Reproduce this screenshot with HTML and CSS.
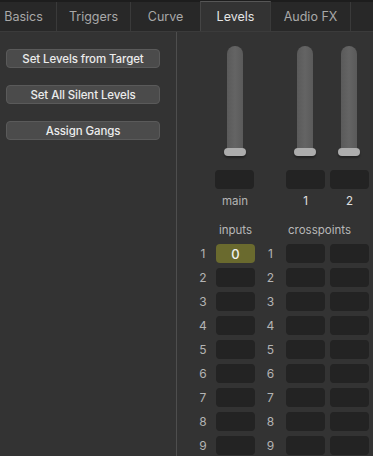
FILE: index.html
```html
<!DOCTYPE html>
<html>
<head>
<meta charset="utf-8">
<link rel="stylesheet" href="styles.css">
</head>
<body>
<div class="app">
  <div class="tabs">
    <div class="tab w-basics">Basics</div>
    <div class="tab w-triggers">Triggers</div>
    <div class="tab w-curve">Curve</div>
    <div class="tab w-levels active">Levels</div>
    <div class="tab w-audio">Audio FX</div>
    <div class="tab-fill"></div>
  </div>
  <div class="body">
    <div class="left">
      <div class="btn">Set Levels from Target</div>
      <div class="btn">Set All Silent Levels</div>
      <div class="btn">Assign Gangs</div>
    </div>
    <div class="divider"></div>
    <div class="right">
      <div class="cols sliders">
        <span></span>
        <div class="slider"><div class="track"></div><div class="handle"></div></div>
        <span></span>
        <div class="slider"><div class="track"></div><div class="handle"></div></div>
        <span></span>
        <div class="slider"><div class="track"></div><div class="handle"></div></div>
      </div>
      <div class="cols meters">
        <span></span><div class="box main"></div><span></span><div class="box"></div><span></span><div class="box"></div>
      </div>
      <div class="cols labels">
        <span></span><div class="lab dim">main</div><span></span><div class="lab">1</div><span></span><div class="lab">2</div>
      </div>
      <div class="cols heads">
        <span></span><div class="head">inputs</div><span></span><div class="head xp">crosspoints</div>
      </div>
      <div class="rows">
        <div class="cols row"><div class="num">1</div><div class="box on">0</div><div class="num">1</div><div class="box"></div><span></span><div class="box"></div></div>
        <div class="cols row"><div class="num">2</div><div class="box"></div><div class="num">2</div><div class="box"></div><span></span><div class="box"></div></div>
        <div class="cols row"><div class="num">3</div><div class="box"></div><div class="num">3</div><div class="box"></div><span></span><div class="box"></div></div>
        <div class="cols row"><div class="num">4</div><div class="box"></div><div class="num">4</div><div class="box"></div><span></span><div class="box"></div></div>
        <div class="cols row"><div class="num">5</div><div class="box"></div><div class="num">5</div><div class="box"></div><span></span><div class="box"></div></div>
        <div class="cols row"><div class="num">6</div><div class="box"></div><div class="num">6</div><div class="box"></div><span></span><div class="box"></div></div>
        <div class="cols row"><div class="num">7</div><div class="box"></div><div class="num">7</div><div class="box"></div><span></span><div class="box"></div></div>
        <div class="cols row"><div class="num">8</div><div class="box"></div><div class="num">8</div><div class="box"></div><span></span><div class="box"></div></div>
        <div class="cols row"><div class="num">9</div><div class="box"></div><div class="num">9</div><div class="box"></div><span></span><div class="box"></div></div>
      </div>
    </div>
  </div>
</div>
</body>
</html>
```

FILE: styles.css
```css
* { box-sizing: border-box; }
html, body { margin: 0; padding: 0; background: #333333; }
body {
  width: 373px; height: 456px; overflow: hidden;
  font-family: Inter, "Liberation Sans", sans-serif;
  font-size: 12px;
}
.app { display: flex; flex-direction: column; height: 456px; }
.tabs {
  display: flex; height: 32px;
  background: #282828;
  border-top: 2px solid #1d1d1d;
  border-bottom: 1px solid #3b3b3b;
}
.tab {
  display: flex; align-items: center; justify-content: center;
  color: #a9a9a9; font-size: 12.5px;
  border-right: 1px solid #3a3a3a;
  height: 29px;
}
.w-basics { width: 57px; padding-right: 9px; }
.w-triggers { width: 74px; }
.w-curve { width: 70px; }
.w-levels { width: 70px; }
.w-audio { width: 80px; }
.tab.active {
  background: #333333; color: #e4e4e4;
  border-top: 1px solid #565656;
  border-left: 1px solid #454545;
  margin-top: -1px; height: 30px;
}
.w-levels.active { margin-left: -1px; width: 71px; }
.tab-fill { flex: 1; }
.body { display: flex; flex: 1; }
.left {
  width: 176px; display: flex; flex-direction: column;
  gap: 17px; padding: 17px 0 0 6px;
}
.btn {
  width: 154px; height: 19px; border-radius: 4px;
  background: #4b4b4b; border: 1px solid #5a5a5a;
  color: #ececec; font-weight: 500; font-size: 11.5px;
  letter-spacing: -0.1px;
  display: flex; align-items: center; justify-content: center;
}
.divider { width: 1px; background: #4e4e4e; }
.right { flex: 1; padding-left: 13px; }
.cols {
  display: grid;
  grid-template-columns: 26px 39px 31px 39px 5px 39px;
}
.sliders { margin-top: 14px; height: 112px; }
.slider { position: relative; height: 112px; }
.track {
  position: absolute; left: 11px; top: 0; width: 16px; height: 108px;
  background: linear-gradient(90deg, #5a5a5a, #646464 50%, #5a5a5a);
  border-radius: 8px 8px 0 0;
}
.handle {
  position: absolute; left: 8px; top: 102px; width: 22px; height: 8px;
  border-radius: 4px; background: #adadad;
  box-shadow: 0 2px 2px rgba(0,0,0,0.35);
}
.meters { margin-top: 12px; }
.box.main { margin-left: -1px; margin-right: 1px; }
.box {
  height: 19px; border-radius: 4px; background: #232323;
  display: flex; align-items: center; justify-content: center;
}
.box.on { background: #6a6a2e; color: #f2f2f2; font-size: 13px; font-weight: 500; }
.labels { margin-top: 5px; line-height: 14px; }
.lab { text-align: center; color: #e2e2e2; font-size: 11.5px; }
.lab.dim { color: #b4b4b4; margin-left: -1px; }
.heads { margin-top: 15px; line-height: 14px; }
.head { text-align: center; color: #b8b8b8; font-size: 11.5px; }
.head.xp { grid-column: 4 / 7; text-align: left; padding-left: 2px; }
.rows { margin-top: 7px; display: flex; flex-direction: column; gap: 5px; }
.row { height: 19px; }
.num {
  color: #b4b4b4; font-size: 12px; text-align: center;
  display: flex; align-items: center; justify-content: center;
}
```
